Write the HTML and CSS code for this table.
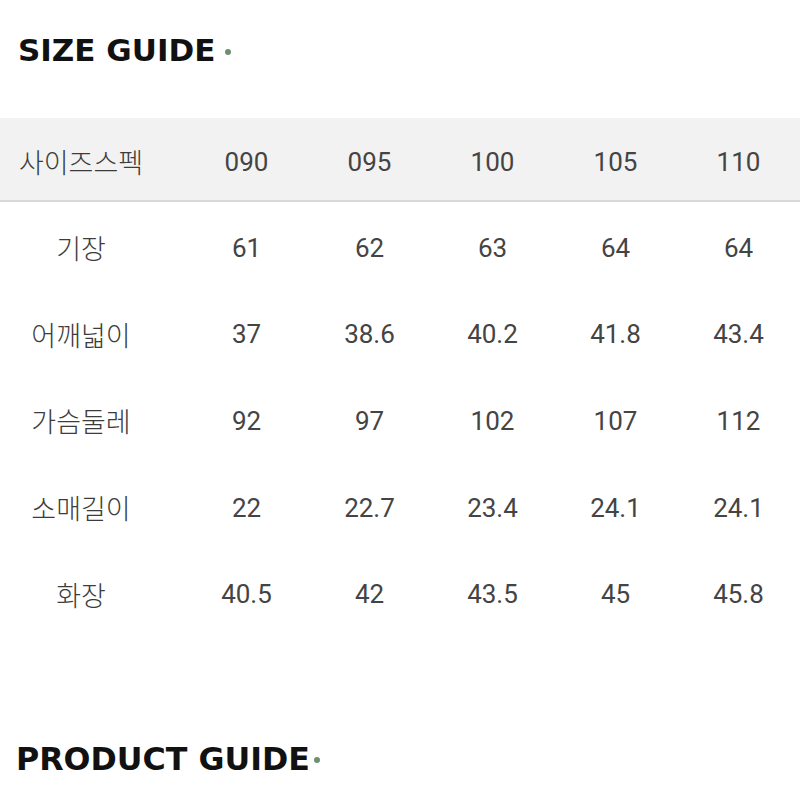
FILE: index.html
```html
<!DOCTYPE html>
<html lang="ko">
<head>
<meta charset="utf-8">
<link rel="stylesheet" href="styles.css">
</head>
<body>
<h2 class="title title-size">SIZE GUIDE<span class="dot"></span></h2>
<div class="table">
  <div class="row head">
    <div class="label">사이즈스펙</div><div>090</div><div>095</div><div>100</div><div>105</div><div>110</div>
  </div>
  <div class="row"><div class="label">기장</div><div>61</div><div>62</div><div>63</div><div>64</div><div>64</div></div>
  <div class="row"><div class="label">어깨넓이</div><div>37</div><div>38.6</div><div>40.2</div><div>41.8</div><div>43.4</div></div>
  <div class="row"><div class="label">가슴둘레</div><div>92</div><div>97</div><div>102</div><div>107</div><div>112</div></div>
  <div class="row"><div class="label">소매길이</div><div>22</div><div>22.7</div><div>23.4</div><div>24.1</div><div>24.1</div></div>
  <div class="row"><div class="label">화장</div><div>40.5</div><div>42</div><div>43.5</div><div>45</div><div>45.8</div></div>
</div>
<h2 class="title title-product">PRODUCT GUIDE<span class="dot"></span></h2>
</body>
</html>
```
FILE: styles.css
```css
html, body { margin: 0; padding: 0; background: #fff; }
body { width: 800px; height: 800px; overflow: hidden; font-family: "Roboto", "Noto Sans CJK KR", sans-serif; }
.title {
  margin: 0;
  font-family: "DejaVu Sans", "Liberation Sans", sans-serif;
  font-weight: 700;
  line-height: 36px;
  color: #111;
  white-space: nowrap;
}
.title-size { font-size: 31px; margin-top: 32px; padding-left: 18px; }
.title-product { font-size: 31.7px; margin-top: 106px; padding-left: 16px; }
.dot {
  display: inline-block;
  width: 6px; height: 6px; border-radius: 50%;
  background: #6f8f6f;
  margin: 0 0 6px 10px;
}
.title-product .dot { margin-left: 4px; margin-bottom: 7px; }
.table { margin-top: 50px; }
.row {
  display: grid;
  grid-template-columns: 162px 23px repeat(5, 123px);
  height: 86.6px;
  box-sizing: border-box;
  padding-top: 5px;
  align-items: center;
  font-size: 26px;
  color: #444;
}
.row > div { text-align: center; }
.row > .label { grid-column: 1; font-size: 27px; font-weight: 300; color: #3c3c3c; }
.row > div:nth-child(2) { grid-column: 3; }
.head { background: #f2f2f2; height: 84px; border-bottom: 2px solid #d8d8d8; }
```
